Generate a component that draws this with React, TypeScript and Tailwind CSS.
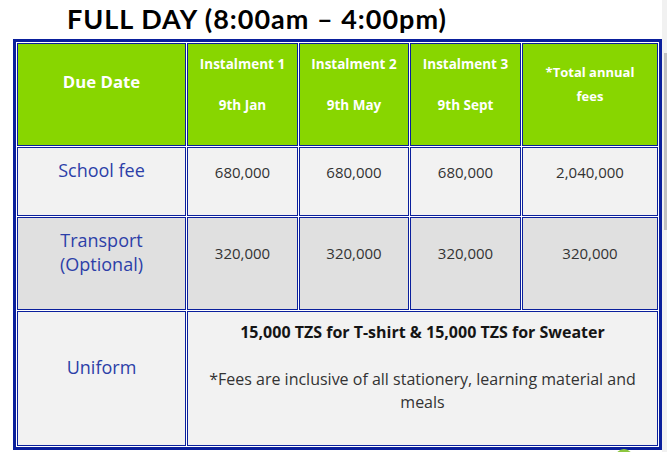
import React from "react";

const B = "border border-[#0a1f9c]";
const head = `${B} bg-[#88d600] flex flex-col items-center justify-center text-center text-white font-bold`;
const cellBase = `${B} flex flex-col items-center justify-center text-center`;

export default function App() {
  const inst = [
    ["Instalment 1", "9th Jan"],
    ["Instalment 2", "9th May"],
    ["Instalment 3", "9th Sept"],
  ];
  return (
    <div className="relative w-[667px] h-[452px] overflow-hidden bg-white flex" style={{ fontFamily: '"Open Sans", sans-serif' }}>
      <div className="w-[662px] flex flex-col">
        <div className="h-[39px] pl-[67px] pt-[3px]">
          <h1 className="text-[27px] leading-[32px] font-bold text-black tracking-[1px]" style={{ fontFamily: 'Lato, sans-serif' }}>
            FULL DAY (8:00am – 4:00pm)
          </h1>
        </div>
        <div className="ml-[13px] w-[649px] border-[3px] border-[#0a1f9c] p-[1px] bg-white grid grid-cols-[169px_111px_110px_111px_136px] grid-rows-[103px_69px_93px_135px] gap-[1px]">
          <div className={`${head} pb-[26px] text-[16.8px] leading-[24px]`}>Due Date</div>
          {inst.map(([a, b]) => (
            <div key={a} className={`${head} pb-[20px] text-[13.5px] leading-[24px]`}>
              <span>{a}</span>
              <span className="mt-[17px]">{b}</span>
            </div>
          ))}
          <div className={`${head} pb-[22px] text-[13px] leading-[24px]`}>
            <span>*Total annual</span>
            <span>fees</span>
          </div>

          <div className={`${cellBase} bg-[#f2f2f2] pb-[23px] text-[18px] leading-[24px] text-[#2c3fa8]`}>School fee</div>
          {["680,000", "680,000", "680,000", "2,040,000"].map((v, i) => (
            <div key={i} className={`${cellBase} bg-[#f2f2f2] pb-[19px] text-[15px] leading-[24px] text-[#333333]`}>{v}</div>
          ))}

          <div className={`${cellBase} bg-[#e0e0e0] pb-[23px] text-[18px] leading-[24px] text-[#2c3fa8]`}>
            <span>Transport</span>
            <span>(Optional)</span>
          </div>
          {["320,000", "320,000", "320,000", "320,000"].map((v, i) => (
            <div key={i} className={`${cellBase} bg-[#e0e0e0] pb-[21px] text-[15px] leading-[24px] text-[#333333]`}>{v}</div>
          ))}

          <div className={`${cellBase} bg-[#f2f2f2] pb-[24px] text-[18px] leading-[24px] text-[#2c3fa8]`}>Uniform</div>
          <div className={`${cellBase} col-span-4 bg-[#f2f2f2] pb-[22px] px-[12px] text-[16px] leading-[23.5px] text-[#333333]`}>
            <span className="font-bold text-[#151515]">15,000 TZS for T-shirt &amp; 15,000 TZS for Sweater</span>
            <span className="mt-[23.5px]">*Fees are inclusive of all stationery, learning material and meals</span>
          </div>
        </div>
      </div>
      <div className="w-[5px] h-full bg-[#f1f1f1] pt-[53px] flex justify-end">
        <div className="w-[3px] h-[177px] bg-[#c1c1c1]" />
      </div>
      <div className="absolute left-[615px] top-[449px] w-[18px] h-[18px] rounded-full bg-[#8cc63f]" />
    </div>
  );
}
